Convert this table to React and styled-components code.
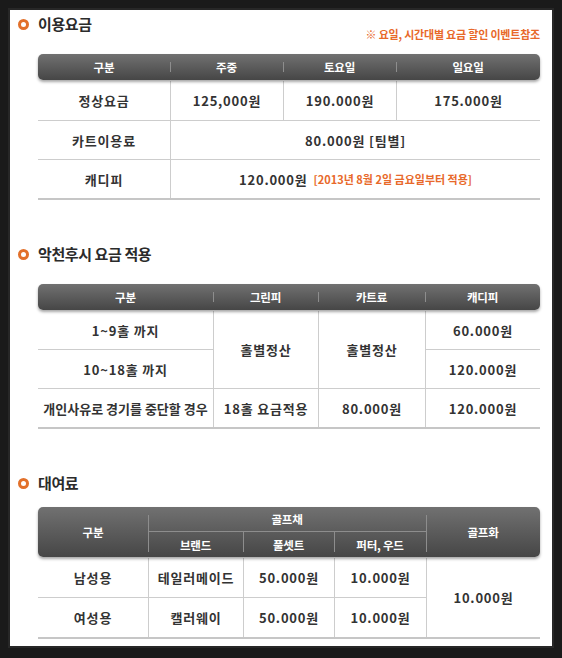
import React from 'react';
import styled, { createGlobalStyle } from 'styled-components';

const GlobalStyle = createGlobalStyle`
  html, body { margin: 0; padding: 0; background: #1a1a1a; }
  body { font-family: "Noto Sans CJK KR", "Noto Sans", sans-serif; }
  * { box-sizing: border-box; }
`;

const Frame = styled.div`
  padding: 10px;
`;

const Panel = styled.main`
  width: 542px;
  background: #fff;
  box-shadow: 0 0 0 2px #272727;
  padding: 4px 12px 7px 8px;
`;

const Section = styled.section`
  margin-top: ${(p) => p.$top || 0}px;
`;

const TitleRow = styled.div`
  display: flex;
  justify-content: space-between;
  align-items: flex-end;
`;

const Title = styled.h2`
  margin: 0 0 ${(p) => p.$after || 0}px;
  display: flex;
  align-items: center;
  gap: 9px;
  font-size: 15px;
  font-weight: 700;
  line-height: 20px;
  color: #2b2b2b;
  letter-spacing: -0.4px;
`;

const Ring = styled.span`
  width: 11px;
  height: 11px;
  border: 3px solid #e2702a;
  border-radius: 50%;
  flex: none;
`;

const Note = styled.p`
  margin: 0;
  font-size: 11px;
  font-weight: 700;
  line-height: 14px;
  color: #e8692a;
  letter-spacing: -0.2px;
`;

const TableWrap = styled.div`
  margin-left: 20px;
  margin-top: ${(p) => p.$top || 0}px;
`;

const Head = styled.div`
  position: relative;
  z-index: 1;
  display: grid;
  grid-template-columns: ${(p) => p.$cols};
  grid-template-rows: ${(p) => p.$rows || '26px'};
  background: linear-gradient(#717171, #464646);
  border-radius: 5px;
  box-shadow: 0 2px 3px rgba(0, 0, 0, 0.35);
`;

const HeadCell = styled.div`
  position: relative;
  display: flex;
  align-items: center;
  justify-content: center;
  color: #fff;
  font-size: 11.5px;
  font-weight: 700;
  letter-spacing: -0.2px;
  grid-column: ${(p) => p.$col || 'auto'};
  grid-row: ${(p) => p.$row || 'auto'};
  border-bottom: ${(p) => (p.$under ? '1px solid #8d8d8d' : 'none')};
  &::before {
    content: ${(p) => (p.$line ? "''" : 'none')};
    position: absolute;
    left: 0;
    top: ${(p) => (p.$line ? p.$line[0] : 0)}px;
    bottom: ${(p) => (p.$line ? p.$line[1] : 0)}px;
    width: 1px;
    background: #8d8d8d;
  }
`;

const Body = styled.div`
  display: grid;
  grid-template-columns: ${(p) => p.$cols};
  grid-template-rows: ${(p) => p.$rows};
  border-bottom: 2px solid #c6c6c6;
  margin-top: 1px;
`;

const Cell = styled.div`
  display: flex;
  align-items: center;
  justify-content: center;
  gap: 6px;
  font-size: 13px;
  font-weight: 700;
  color: #333;
  letter-spacing: 0.8px;
  white-space: nowrap;
  grid-column: ${(p) => p.$col || 'auto'};
  grid-row: ${(p) => p.$row || 'auto'};
  border-left: ${(p) => (p.$lead ? 'none' : '1px solid #cdcdcd')};
  border-bottom: ${(p) => (p.$end ? 'none' : '1px solid #cdcdcd')};
`;

const Tight = styled.span`
  letter-spacing: ${(p) => p.$ls || 0}px;
`;

const Small = styled.span`
  font-size: 11px;
  font-weight: 700;
  color: #e8692a;
  letter-spacing: 0px;
`;

const C1 = '132px 113px 113px 1fr';
const C2 = '175px 105px 107px 1fr';
const C3 = '110px 95px 91px 92px 1fr';
const SHORT = [8, 8];

export default function App() {
  return (
    <>
      <GlobalStyle />
      <Frame>
        <Panel>
          <Section>
            <TitleRow>
              <Title $after={7}>
                <Ring />
                이용요금
              </Title>
              <Note>※ 요일, 시간대별 요금 할인 이벤트참조</Note>
            </TitleRow>
            <TableWrap $top={13}>
              <Head $cols={C1}>
                <HeadCell>구분</HeadCell>
                <HeadCell $line={SHORT}>주중</HeadCell>
                <HeadCell $line={SHORT}>토요일</HeadCell>
                <HeadCell $line={SHORT}>일요일</HeadCell>
              </Head>
              <Body $cols={C1} $rows="40px 39px 38px">
                <Cell $lead>정상요금</Cell>
                <Cell>125,000원</Cell>
                <Cell>190.000원</Cell>
                <Cell>175.000원</Cell>
                <Cell $lead>카트이용료</Cell>
                <Cell $col="span 3">80.000원 [팀별]</Cell>
                <Cell $lead $end>캐디피</Cell>
                <Cell $col="span 3" $end>
                  120.000원 <Small>[2013년 8월 2일 금요일부터 적용]</Small>
                </Cell>
              </Body>
            </TableWrap>
          </Section>

          <Section $top={44}>
            <Title $after={20}>
              <Ring />
              악천후시 요금 적용
            </Title>
            <TableWrap>
              <Head $cols={C2}>
                <HeadCell>구분</HeadCell>
                <HeadCell $line={SHORT}>그린피</HeadCell>
                <HeadCell $line={SHORT}>카트료</HeadCell>
                <HeadCell $line={SHORT}>캐디피</HeadCell>
              </Head>
              <Body $cols={C2} $rows="39px 39px 38px">
                <Cell $lead>1~9홀 까지</Cell>
                <Cell $row="span 2">홀별정산</Cell>
                <Cell $row="span 2">홀별정산</Cell>
                <Cell>60.000원</Cell>
                <Cell $lead>10~18홀 까지</Cell>
                <Cell>120.000원</Cell>
                <Cell $lead $end>
                  <Tight $ls={0}>개인사유로 경기를 중단할 경우</Tight>
                </Cell>
                <Cell $end>18홀 요금적용</Cell>
                <Cell $end>80.000원</Cell>
                <Cell $end>120.000원</Cell>
              </Body>
            </TableWrap>
          </Section>

          <Section $top={44}>
            <Title $after={14}>
              <Ring />
              대여료
            </Title>
            <TableWrap>
              <Head $cols={C3} $rows="25px 25px">
                <HeadCell $row="span 2">구분</HeadCell>
                <HeadCell $col="span 3" $line={[8, 0]} $under>골프채</HeadCell>
                <HeadCell $row="span 2" $line={[8, 5]}>골프화</HeadCell>
                <HeadCell $line={[0, 5]}>브랜드</HeadCell>
                <HeadCell $line={[0, 5]}>풀셋트</HeadCell>
                <HeadCell $line={[0, 5]}>퍼터, 우드</HeadCell>
              </Head>
              <Body $cols={C3} $rows="40px 39px">
                <Cell $lead>남성용</Cell>
                <Cell>테일러메이드</Cell>
                <Cell>50.000원</Cell>
                <Cell>10.000원</Cell>
                <Cell $row="span 2" $end>10.000원</Cell>
                <Cell $lead $end>여성용</Cell>
                <Cell $end>캘러웨이</Cell>
                <Cell $end>50.000원</Cell>
                <Cell $end>10.000원</Cell>
              </Body>
            </TableWrap>
          </Section>
        </Panel>
      </Frame>
    </>
  );
}
